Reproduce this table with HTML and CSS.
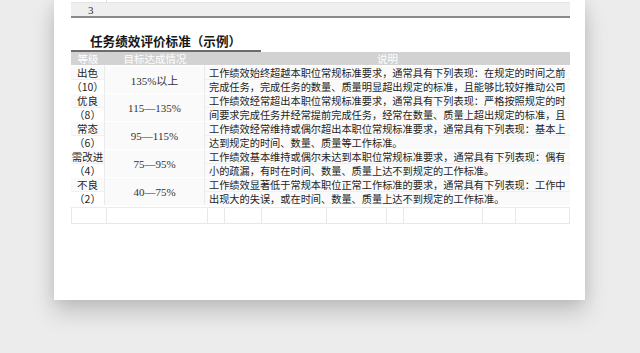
FILE: index.html
```html
<!DOCTYPE html>
<html lang="zh">
<head>
<meta charset="utf-8">
<link rel="stylesheet" href="styles.css">
</head>
<body>
<div class="page">
  <div class="sheet">
    <div class="prev"><span class="pc1"></span><span class="pc2"></span></div>
    <div class="num-row"><span class="num">3</span></div>
    <div class="rule"></div>
    <h2 class="title">任务绩效评价标准（示例）</h2>
    <div class="title-bar"></div>
    <div class="grid">
      <div class="hd">等级</div>
      <div class="hd">目标达成情况</div>
      <div class="hd">说明</div>

      <div class="lv"><span>出色</span><span class="alt">（10）</span></div>
      <div class="val">135%以上</div>
      <div class="desc"><span>工作绩效始终超越本职位常规标准要求，通常具有下列表现：在规定的时间之前</span><span class="alt">完成任务，完成任务的数量、质量明显超出规定的标准，且能够比较好推动公司</span></div>

      <div class="lv"><span>优良</span><span class="alt">（8）</span></div>
      <div class="val">115—135%</div>
      <div class="desc"><span>工作绩效经常超出本职位常规标准要求，通常具有下列表现：严格按照规定的时</span><span class="alt">间要求完成任务并经常提前完成任务，经常在数量、质量上超出规定的标准，且</span></div>

      <div class="lv"><span>常态</span><span class="alt">（6）</span></div>
      <div class="val">95—115%</div>
      <div class="desc"><span>工作绩效经常维持或偶尔超出本职位常规标准要求，通常具有下列表现：基本上</span><span class="alt">达到规定的时间、数量、质量等工作标准。</span></div>

      <div class="lv"><span>需改进</span><span class="alt">（4）</span></div>
      <div class="val">75—95%</div>
      <div class="desc"><span>工作绩效基本维持或偶尔未达到本职位常规标准要求，通常具有下列表现：偶有</span><span class="alt">小的疏漏，有时在时间、数量、质量上达不到规定的工作标准。</span></div>

      <div class="lv"><span>不良</span><span class="alt">（2）</span></div>
      <div class="val">40—75%</div>
      <div class="desc"><span>工作绩效显著低于常规本职位正常工作标准的要求，通常具有下列表现：工作中</span><span class="alt">出现大的失误，或在时间、数量、质量上达不到规定的工作标准。</span></div>
    </div>
    <div class="empty-row">
      <span class="e1"></span>
      <span class="e2"></span>
      <span class="e3"></span>
      <span class="e4"></span>
      <span class="e5"></span>
      <span class="e6"></span>
      <span class="e3"></span>
      <span class="e7"></span>
      <span class="e8"></span>
      <span class="e9"></span>
    </div>
  </div>
</div>
</body>
</html>
```
FILE: styles.css
```css
html, body {
  margin: 0;
  padding: 0;
  background: #ececec;
  width: 640px;
  height: 353px;
  overflow: hidden;
}
body {
  font-family: "Noto Sans CJK SC", "Liberation Serif", sans-serif;
  color: #1e1e1e;
}
.page {
  margin-left: 54px;
  width: 531px;
  height: 300px;
  background: #fff;
  box-shadow: 0 12px 22px rgba(0, 0, 0, 0.18), 0 0 14px rgba(0, 0, 0, 0.08);
}
.sheet {
  padding-left: 17px;
  width: 499px;
}
.prev {
  display: flex;
  height: 2px;
  border-bottom: 1px solid #e4e4e4;
}
.pc1 {
  width: 35px;
  border-right: 1px solid #ddd;
}
.num-row {
  height: 13px;
  background: #efefef;
  font-family: "Liberation Serif", serif;
  font-size: 11px;
  line-height: 14px;
  color: #333;
}
.num {
  padding-left: 17px;
}
.rule {
  height: 2px;
  background: #8a8a8a;
}
.title {
  margin: 0;
  padding: 15px 0 0 19px;
  height: 17px;
  font-size: 12.6px;
  line-height: 16px;
  font-weight: 700;
  color: #161616;
}
.title-bar {
  width: 190px;
  height: 2px;
  background: #6c6c6c;
}
.grid {
  display: grid;
  grid-template-columns: 34px 100px 365px;
  grid-template-rows: 13px repeat(5, 28px);
  background: #fafafa;
}
.hd {
  background: #d2d2d2;
  color: #fff;
  font-size: 10.5px;
  line-height: 13px;
  text-align: center;
}
.lv, .desc, .val {
  box-sizing: border-box;
  border-top: 1px solid #fff;
}
.lv, .desc {
  display: flex;
  flex-direction: column;
  font-size: 10.2px;
}
.lv {
  font-size: 10.5px;
  border-right: 1px solid #eaeaea;
}
.lv span, .desc span {
  display: block;
  height: 13px;
  line-height: 13px;
  text-align: center;
  box-sizing: border-box;
}
.lv span + span, .desc span + span {
  height: 14px;
  border-top: 1px solid #f0f0f0;
}
.lv .alt {
  background: #fff;
}
.desc span {
  text-align: left;
  padding-left: 4px;
  white-space: nowrap;
}
.val {
  display: flex;
  align-items: center;
  justify-content: center;
  font-family: "Liberation Serif", "Noto Sans CJK SC", serif;
  font-size: 11px;
  border-right: 1px solid #eaeaea;
  color: #333;
}
.empty-row {
  display: flex;
  height: 15px;
  border-top: 1px solid #ececec;
  border-bottom: 1px solid #e8e8e8;
  border-left: 1px solid #e8e8e8;
  margin-top: 2px;
}
.empty-row span {
  border-right: 1px solid #e8e8e8;
  box-sizing: border-box;
}
.e1 { width: 35px; }
.e2 { width: 101px; }
.e3 { width: 17px; }
.e4 { width: 37px; }
.e5 { width: 65px; }
.e6 { width: 61px; }
.e7 { width: 79px; }
.e8 { width: 33px; }
.e9 { width: 54px; }
```
